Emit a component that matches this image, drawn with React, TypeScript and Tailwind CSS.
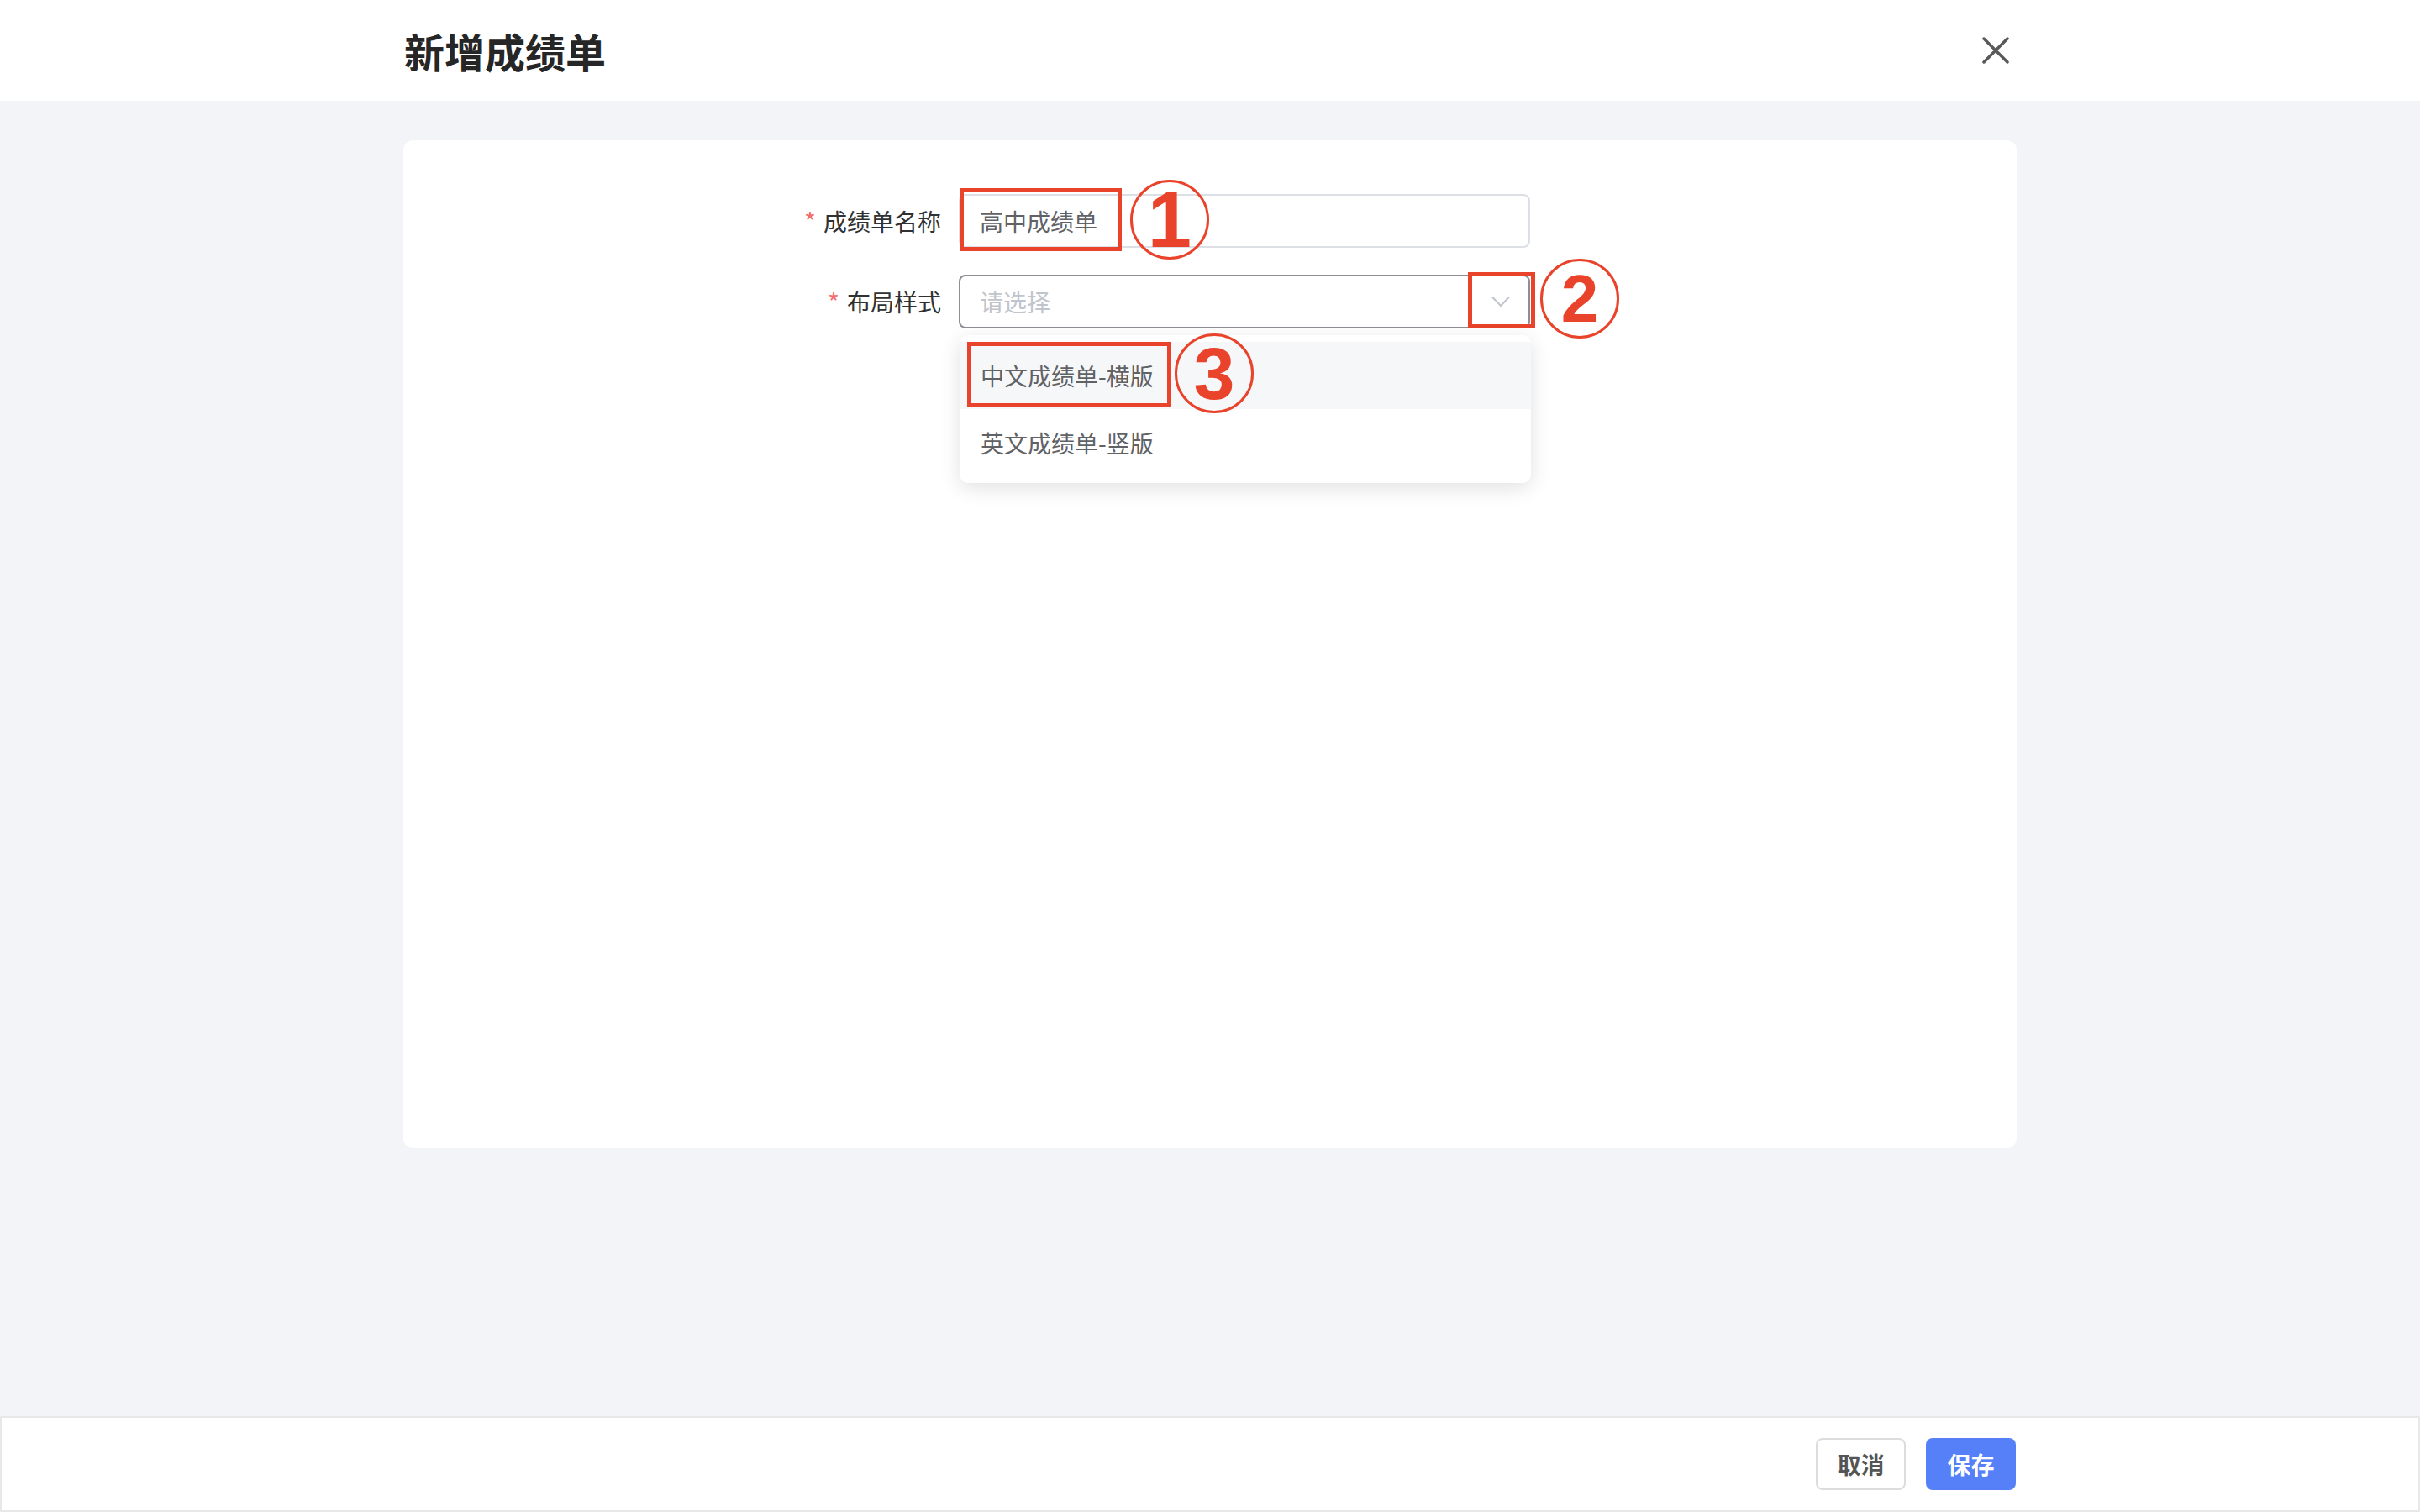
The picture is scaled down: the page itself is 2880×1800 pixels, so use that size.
import * as React from "react";

const RED = "border-[#e9432b]";

const Circled = ({ n, size, className }: { n: string; size: string; className: string }) => (
  <span
    className={`absolute flex h-[95px] w-[94px] items-center justify-center rounded-full border-[3px] ${RED} font-['Liberation_Sans',Arial,sans-serif] font-bold leading-none text-[#e9432b] ${size} ${className}`}
  >
    {n}
  </span>
);

const Label = ({ text }: { text: string }) => (
  <div className="flex w-[200px] items-center justify-end text-[28px] text-[#303133]">
    <span className="mr-[9px] text-[30px] text-[#f56c6c]">*</span>
    {text}
  </div>
);

export default function App() {
  return (
    <div className="flex h-[1800px] w-[2880px] flex-col bg-[#f3f4f8] font-['Noto_Sans_CJK_SC',sans-serif]">
      <header className="flex h-[120px] shrink-0 items-center justify-between bg-white pl-[481px] pr-[489px]">
        <h1 className="text-[48px] font-bold text-[#262626]">新增成绩单</h1>
        <svg width="32" height="32" viewBox="0 0 32 32" className="text-[#595959]">
          <path d="M2 2 L30 30 M30 2 L2 30" stroke="currentColor" strokeWidth="3.5" strokeLinecap="round" />
        </svg>
      </header>

      <main className="flex flex-1 flex-col">
        <section className="mx-auto mt-[47px] h-[1200px] w-[1920px] rounded-[12px] bg-white pl-[440px] pt-[64px]">
          <div className="flex flex-col gap-[32px]">
            <div className="flex items-center gap-[21px]">
              <Label text="成绩单名称" />
              <div className="relative w-[680px]">
                <div className="flex h-[64px] items-center rounded-[8px] border-2 border-[#dcdfe6] pl-[23px] text-[28px] text-[#606266]">
                  高中成绩单
                </div>
                <div className={`absolute left-[1px] top-[-7px] h-[75px] w-[193px] border-[5px] ${RED}`} />
                <Circled n="1" size="text-[94px]" className="left-[204px] top-[-17px]" />
              </div>
            </div>

            <div className="flex items-center gap-[21px]">
              <Label text="布局样式" />
              <div className="relative w-[680px]">
                <div className="flex h-[64px] items-center justify-between rounded-[8px] border-2 border-[#8e8e94] pl-[23px] pr-[22px] text-[28px] text-[#c0c4cc]">
                  <span>请选择</span>
                  <svg width="22" height="14" viewBox="0 0 22 14" className="text-[#c0c4cc]">
                    <path d="M1 1.5 L11 12 L21 1.5" fill="none" stroke="currentColor" strokeWidth="2" />
                  </svg>
                </div>
                <div className={`absolute left-[606px] top-[-3px] h-[67px] w-[80px] border-[5px] ${RED}`} />
                <Circled n="2" size="text-[80px]" className="left-[692px] top-[-19px]" />

                <div className="absolute left-[1px] top-[72px] w-[680px] rounded-[10px] bg-white py-[8px] shadow-[0_6px_24px_rgba(0,0,0,0.12)]">
                  <div className="flex h-[80px] items-center bg-[#f6f7f9] pl-[25px] text-[28px] text-[#606266]">
                    中文成绩单-横版
                  </div>
                  <div className="flex h-[80px] items-center pl-[25px] text-[28px] text-[#606266]">
                    英文成绩单-竖版
                  </div>
                  <div className={`absolute left-[9px] top-[8px] h-[78px] w-[243px] border-[5px] ${RED}`} />
                  <Circled n="3" size="text-[88px]" className="left-[256px] top-[-2px]" />
                </div>
              </div>
            </div>
          </div>
        </section>
      </main>

      <footer className="flex h-[114px] shrink-0 items-center justify-end gap-[24px] border-2 border-[#e8e8ea] bg-white pr-[479px]">
        <button className="h-[62px] w-[107px] rounded-[8px] border-2 border-[#dcdcdc] bg-white text-[28px] font-bold text-[#555]">
          取消
        </button>
        <button className="h-[62px] w-[107px] rounded-[8px] bg-[#5580f8] text-[28px] font-bold text-white">
          保存
        </button>
      </footer>
    </div>
  );
}
